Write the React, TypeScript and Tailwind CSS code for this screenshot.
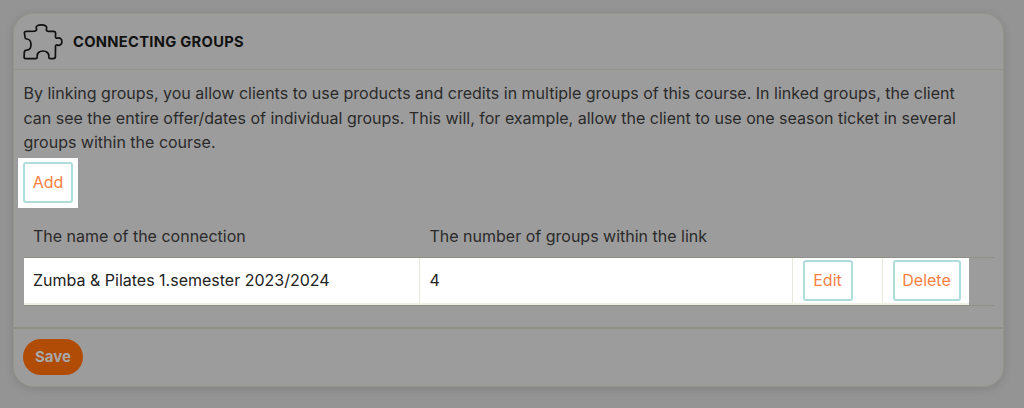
import React from "react";

const dm = "font-['Inter','Noto_Sans',sans-serif]";

function Puzzle() {
  return (
    <svg width="40" height="36" viewBox="0 0 40 36" fill="none" stroke="#111" strokeWidth="1.7" strokeLinejoin="round" strokeLinecap="round" className="shrink-0">
      <path d="M1.5 9.6 C1 8.2 1.8 7.4 3.2 7.4 L11.6 7.2 C13.4 7 14 5.9 13.4 4.6 C12.3 2.2 14.6 0.9 18.4 0.9 C22.2 0.9 24.6 2.4 23.5 4.8 C22.9 6.2 23.6 7.2 25.2 7.3 L30.6 7.4 C31.9 7.5 32.6 8.2 32.6 9.4 L32.5 12.6 C32.5 14.1 33.5 14.5 34.5 14.1 C37 13.2 38.9 15 38.9 17.6 C38.9 20.2 37 22.1 34.5 21.1 C33.4 20.7 32.5 21.2 32.5 22.6 L32.4 32.6 C32.4 34 31.7 34.6 30.4 34.6 L27.6 34.6 C26 34.6 25.6 33.7 25.8 32.4 C26.2 29.2 23.6 27 20 27 C16.4 27 13.8 29.2 14.2 32.4 C14.4 33.7 14 34.6 12.4 34.6 L2.6 34.6 C1.5 34.6 1 34 1.1 32.8 L1.3 28.4 C1.4 26.8 2.6 26.2 3.8 26.2 C6.4 26.2 8 23.8 8 20.6 C8 17.4 6.2 15 3.8 15 C2.6 15 2.1 14.2 2 13 Z" />
    </svg>
  );
}

function Btn({ label, w }: { label: string; w: string }) {
  return (
    <button className={`${w} h-[41px] shrink-0 rounded-[3px] border-2 border-[#aedddb] bg-white text-center text-[16px] text-[#f9803f]`}>
      {label}
    </button>
  );
}

export default function App() {
  return (
    <div className={`h-[408px] w-[1024px] overflow-hidden bg-[#949494] pl-[13px] pt-[13px] ${dm}`}>
      <div className="flex h-[374px] w-[991px] flex-col rounded-[20px] border border-[#94948a] bg-[#9c9c9c] shadow-[0_2px_10px_rgba(0,0,0,0.12)]">
        <div className="flex h-[56px] shrink-0 items-center gap-[10px] border-b border-[#94948a] pl-[9px]">
          <Puzzle />
          <span className="pt-[1px] font-['Inter',sans-serif] text-[14.7px] font-bold tracking-[0.3px] text-[#111]">CONNECTING GROUPS</span>
        </div>

        <div className="flex h-[257px] shrink-0 flex-col pl-[9.5px] pt-[11px]">
          <p className="w-[960px] text-[16px] leading-[24.5px] text-[#2a2a2a]">
            By linking groups, you allow clients to use products and credits in multiple groups of this course. In linked groups, the client can see the entire offer/dates of individual groups. This will, for example, allow the client to use one season ticket in several groups within the course.
          </p>
          <div className="-ml-[5.5px] mt-[3px] w-[60px] bg-white px-[5px] pb-[5px] pt-[4px]">
            <Btn label="Add" w="w-[50px]" />
          </div>

          <div className="mt-[16px] flex h-[33px] w-[970px] items-start text-[16px] text-[#2a2a2a]">
            <div className="w-[396px] pl-[9.5px]">The name of the connection</div>
            <div className="pl-[10px]">The number of groups within the link</div>
          </div>

          <div className="flex h-[49px] w-[970px] border-y border-[#8f8f85]">
            <div className="flex w-[945px] border-b-[2px] border-[#efefe6] bg-white text-[16px] text-[#222]">
              <div className="flex w-[396px] items-center border-r border-[#e8e8dc] pl-[9.5px]">Zumba &amp; Pilates 1.semester 2023/2024</div>
              <div className="flex w-[373px] items-center border-r border-[#e8e8dc] pl-[10px]">4</div>
              <div className="flex w-[90px] items-center border-r border-[#e8e8dc] pl-[10px]">
                <Btn label="Edit" w="w-[50px]" />
              </div>
              <div className="flex flex-1 items-center pl-[10px]">
                <Btn label="Delete" w="w-[68px]" />
              </div>
            </div>
          </div>
        </div>

        <div className="shrink-0 border-t-2 border-[#8f8f85] pl-[9px] pt-[10px]">
          <button className="h-[36px] w-[60px] rounded-full bg-[#b04c06] text-center font-['Inter',sans-serif] text-[15px] font-bold text-[#a8a8a8]">
            Save
          </button>
        </div>
      </div>
    </div>
  );
}
